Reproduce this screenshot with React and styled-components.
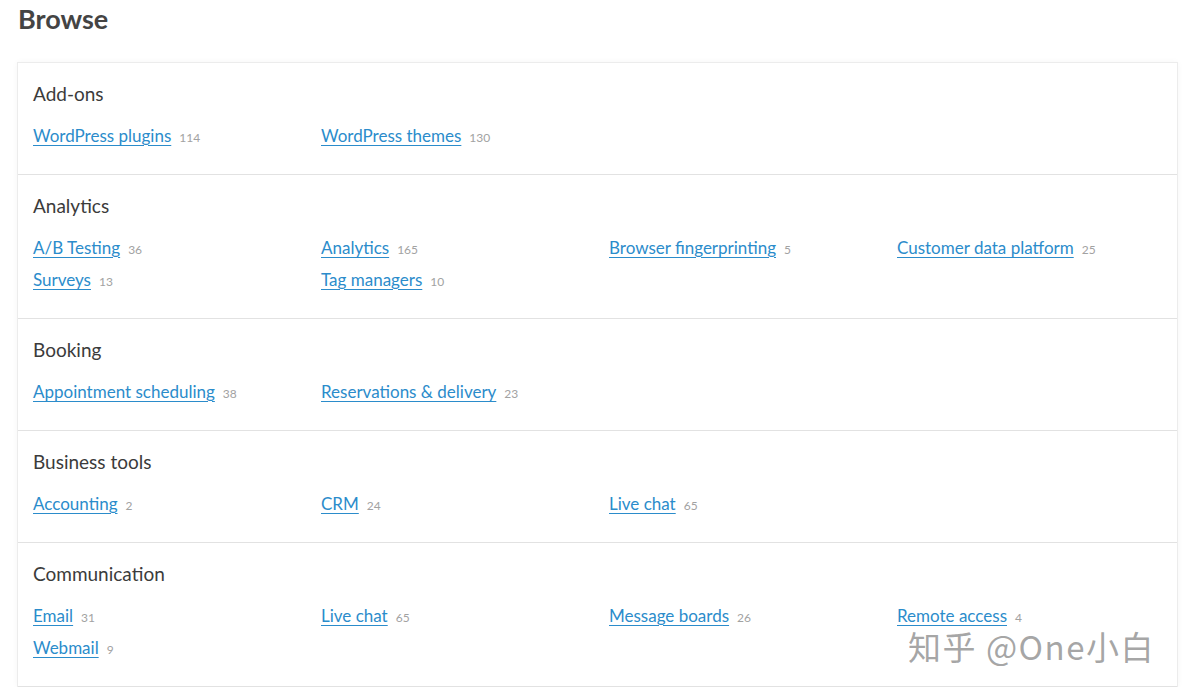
import React from "react";
import styled, { createGlobalStyle } from "styled-components";

const Global = createGlobalStyle`
  html, body {
    margin: 0;
    padding: 0;
    background: #fff;
    font-family: Lato, "Noto Sans", Arial, sans-serif;
  }
`;

const Page = styled.div`
  position: relative;
  padding: 0 12px 0 17px;
`;

const Heading = styled.h1`
  margin: 0;
  height: 38px;
  line-height: 38px;
  font-size: 27px;
  font-weight: 700;
  color: #444;
  padding-left: 1px;
`;

const Card = styled.div`
  margin-top: 24px;
  border: 1px solid #ececec;
  border-bottom: none;
  box-shadow: 0 0 6px rgba(0, 0, 0, 0.04);
  background: #fff;
`;

const Section = styled.section`
  padding: 19px 15px 23px;
  border-bottom: 1px solid #e2e2e2;
`;

const Title = styled.h2`
  margin: 0 0 13px;
  font-size: 19px;
  line-height: 24px;
  font-weight: 400;
  color: #3b3b3b;
`;

const Grid = styled.div`
  display: grid;
  grid-template-columns: repeat(4, 288px);
  grid-auto-rows: 32px;
  align-items: center;
`;

const Item = styled.div`
  white-space: nowrap;
`;

const Link = styled.a`
  color: #2b8ccb;
  font-size: 17px;
  text-decoration: underline;
  text-underline-offset: 3px;
  text-decoration-thickness: 1px;
  cursor: pointer;
`;

const Count = styled.span`
  margin-left: 8px;
  font-size: 12px;
  color: #a2a2a2;
`;

const Watermark = styled.div`
  position: absolute;
  left: 908px;
  top: 629px;
  line-height: 34px;
  font-family: "Noto Sans CJK SC", "Noto Sans", sans-serif;
  font-size: 33px;
  letter-spacing: 1.5px;
  color: rgba(150, 150, 150, 0.85);
  pointer-events: none;
`;

const data = [
  { title: "Add-ons", items: [["WordPress plugins", 114], ["WordPress themes", 130]] },
  {
    title: "Analytics",
    items: [
      ["A/B Testing", 36],
      ["Analytics", 165],
      ["Browser fingerprinting", 5],
      ["Customer data platform", 25],
      ["Surveys", 13],
      ["Tag managers", 10],
    ],
  },
  { title: "Booking", items: [["Appointment scheduling", 38], ["Reservations & delivery", 23]] },
  { title: "Business tools", items: [["Accounting", 2], ["CRM", 24], ["Live chat", 65]] },
  {
    title: "Communication",
    items: [
      ["Email", 31],
      ["Live chat", 65],
      ["Message boards", 26],
      ["Remote access", 4],
      ["Webmail", 9],
    ],
  },
];

export default function App() {
  return (
    <Page>
      <Global />
      <Heading>Browse</Heading>
      <Card>
        {data.map((s) => (
          <Section key={s.title}>
            <Title>{s.title}</Title>
            <Grid>
              {s.items.map(([name, n]) => (
                <Item key={name}>
                  <Link>{name}</Link>
                  <Count>{n}</Count>
                </Item>
              ))}
            </Grid>
          </Section>
        ))}
      </Card>
      <Watermark>知乎 @One小白</Watermark>
    </Page>
  );
}
